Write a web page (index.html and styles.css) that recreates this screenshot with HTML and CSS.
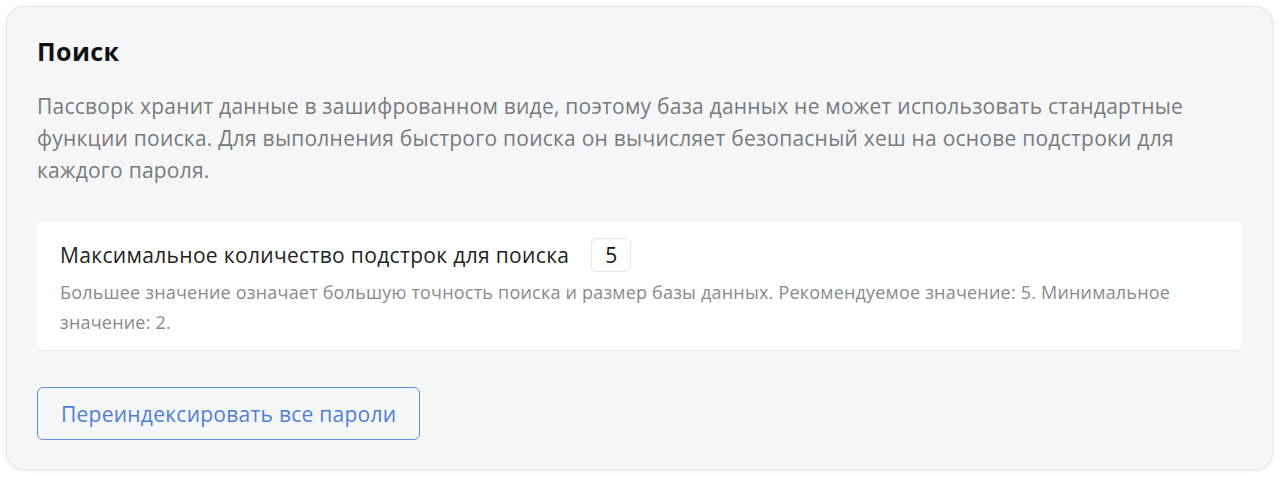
FILE: index.html
```html
<!DOCTYPE html>
<html lang="ru">
<head>
<meta charset="utf-8">
<link rel="stylesheet" href="styles.css">
</head>
<body>
<section class="card">
  <h2 class="title">Поиск</h2>
  <p class="desc">Пассворк хранит данные в зашифрованном виде, поэтому база данных не может использовать стандартные функции поиска. Для выполнения быстрого поиска он вычисляет безопасный хеш на основе подстроки для каждого пароля.</p>
  <div class="setting">
    <div class="setting-row">
      <span class="setting-label">Максимальное количество подстрок для поиска</span>
      <span class="num-input">5</span>
    </div>
    <p class="hint">Большее значение означает большую точность поиска и размер базы данных. Рекомендуемое значение: 5. Минимальное значение: 2.</p>
  </div>
  <button class="btn" type="button">Переиндексировать все пароли</button>
</section>
</body>
</html>
```
FILE: styles.css
```css
* { box-sizing: border-box; }
html, body { margin: 0; padding: 0; background: #ffffff; }
body {
  font-family: "Open Sans", "Noto Sans", sans-serif;
  padding: 6px 7px 7px 6px;
}
.card {
  background: #f5f6f8;
  border: 1px solid #e4e6ea;
  border-radius: 18px;
  box-shadow: 0 1px 4px rgba(0,0,0,0.08);
  padding: 28px 30px 29px 30px;
  height: 464px;
}
.title {
  margin: 0;
  font-size: 25px;
  line-height: 32px;
  font-weight: 700;
  letter-spacing: 0.4px;
  color: #111;
}
.desc {
  margin: 23px 0 0;
  font-size: 21px;
  line-height: 32px;
  letter-spacing: 0.23px;
  color: #7a7a7a;
  max-width: 1160px;
}
.setting {
  margin-top: 36px;
  background: #ffffff;
  border-radius: 6px;
  box-shadow: 0 1px 2px rgba(0,0,0,0.06);
  padding: 16px 22px 13px 23px;
}
.setting-row {
  display: flex;
  align-items: center;
  gap: 22px;
}
.setting-label {
  font-size: 21px;
  letter-spacing: 0.33px;
  color: #222;
}
.num-input {
  display: inline-flex;
  align-items: center;
  justify-content: center;
  width: 40px;
  height: 34px;
  border: 1px solid #e6e6e6;
  border-radius: 6px;
  background: #fff;
  font-size: 21px;
  color: #111;
}
.hint {
  margin: 5px 0 0;
  font-size: 18px;
  line-height: 30px;
  letter-spacing: 0.2px;
  color: #8a8a8a;
}
.btn {
  -webkit-appearance: none;
  appearance: none;
  margin-top: 37px;
  display: block;
  height: 53px;
  padding: 0 23px;
  border-width: 1px;
  border-style: solid;
  border-color: #5f8de0;
  border-radius: 6px;
  background-color: #f5f6f8;
  font-family: inherit;
  font-size: 21px;
  letter-spacing: 0.25px;
  color: #4f7fd4;
  cursor: pointer;
}
```
